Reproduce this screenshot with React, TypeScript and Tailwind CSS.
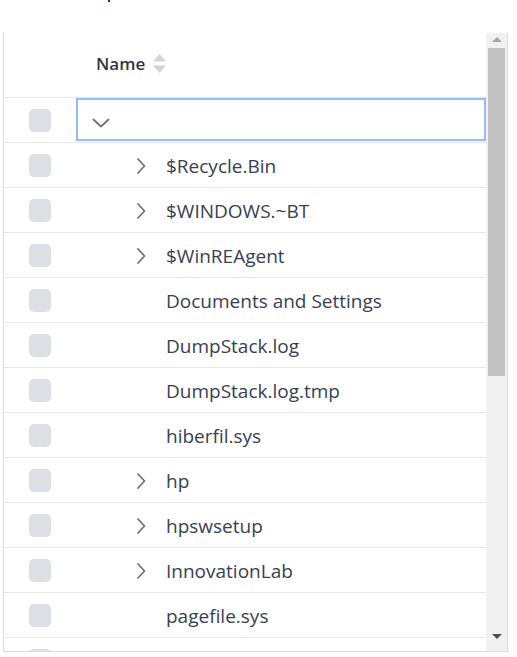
import React from "react";

type Node = {
  name: string;
  folder: boolean;
};

const items: Node[] = [
  { name: "$Recycle.Bin", folder: true },
  { name: "$WINDOWS.~BT", folder: true },
  { name: "$WinREAgent", folder: true },
  { name: "Documents and Settings", folder: false },
  { name: "DumpStack.log", folder: false },
  { name: "DumpStack.log.tmp", folder: false },
  { name: "hiberfil.sys", folder: false },
  { name: "hp", folder: true },
  { name: "hpswsetup", folder: true },
  { name: "InnovationLab", folder: true },
  { name: "pagefile.sys", folder: false },
];

const ChevronRight = () => (
  <svg width="10" height="18" viewBox="0 0 10 18" fill="none">
    <polyline points="2,2 8.5,9 2,16" stroke="#6b7280" strokeWidth="1.8" strokeLinecap="round" strokeLinejoin="round" />
  </svg>
);

const ChevronDown = () => (
  <svg width="18" height="10" viewBox="0 0 18 10" fill="none">
    <polyline points="1.5,1.5 9,8.5 16.5,1.5" stroke="#6b7280" strokeWidth="1.8" strokeLinecap="round" strokeLinejoin="round" />
  </svg>
);

const SortIcon = () => (
  <svg width="13" height="19" viewBox="0 0 13 19">
    <polygon points="6.5,0 13,7.5 0,7.5" fill="#d1d5db" />
    <polygon points="0,11.5 13,11.5 6.5,19" fill="#d1d5db" />
  </svg>
);

const Checkbox = () => <span className="block w-[22px] h-[23px] rounded-[5px] bg-[#dcdfe4]" />;

const App: React.FC = () => {
  return (
    <div className="min-h-screen bg-white" style={{ fontFamily: '"Open Sans", "Noto Sans", sans-serif' }}>
      {/* cut-off link above */}
      <div className="h-[33px]">
        <span className="block ml-[108px] w-[2px] h-[2px] bg-[#2222dd]" />
      </div>

      <div className="ml-[3px] w-[505px] h-[619px] border-x border-b border-[#dcdcdc] flex overflow-hidden">
        {/* Tree table */}
        <div className="flex-1 min-w-0">
          {/* Header */}
          <div className="h-[65px] flex items-center border-b border-[#e5e7eb] pb-[3px]">
            <div className="w-[72px]" />
            <div className="pl-[20px] flex items-center gap-[8px]">
              <span className="text-[17px] font-semibold text-[#2d3748]">Name</span>
              <SortIcon />
            </div>
          </div>

          {/* Root row (focused) */}
          <div className="h-[45px] flex border-b border-[#e5e7eb]">
            <div className="w-[72px] flex items-center justify-center">
              <Checkbox />
            </div>
            <div className="flex-1 pb-[1px]">
              <div className="h-full border-2 border-[#93bdf7] flex items-center pl-[14px] pt-[6px]">
                <ChevronDown />
              </div>
            </div>
          </div>

          {items.map((item) => (
            <div key={item.name} className="h-[45px] flex border-b border-[#e5e7eb]">
              <div className="w-[72px] flex items-center justify-center">
                <Checkbox />
              </div>
              <div className="flex-1 flex items-center pl-[55px] pt-[3px]">
                <span className="w-[20px] flex justify-center -mt-[1px]">{item.folder && <ChevronRight />}</span>
                <span className="ml-[15px] text-[19px] text-[#374151] whitespace-nowrap">{item.name}</span>
              </div>
            </div>
          ))}

          {/* partially visible row */}
          <div className="h-[45px] flex">
            <div className="w-[72px] flex items-start justify-center pt-[11px]">
              <Checkbox />
            </div>
          </div>
        </div>

        {/* Scrollbar */}
        <div className="w-[21px] bg-[#f1f1f1] flex flex-col items-center">
          <div className="h-[12px] pt-[4px] flex justify-center">
            <span className="block w-0 h-0 border-x-[5px] border-x-transparent border-b-[5px] border-b-[#a3a3a3]" />
          </div>
          <div className="mt-[3px] w-[17px] h-[328px] bg-[#c1c1c1]" />
          <div className="flex-1" />
          <div className="h-[17px] flex items-start justify-center">
            <span className="block w-0 h-0 border-x-[5px] border-x-transparent border-t-[5px] border-t-[#505050]" />
          </div>
        </div>
      </div>
    </div>
  );
};

export default App;
